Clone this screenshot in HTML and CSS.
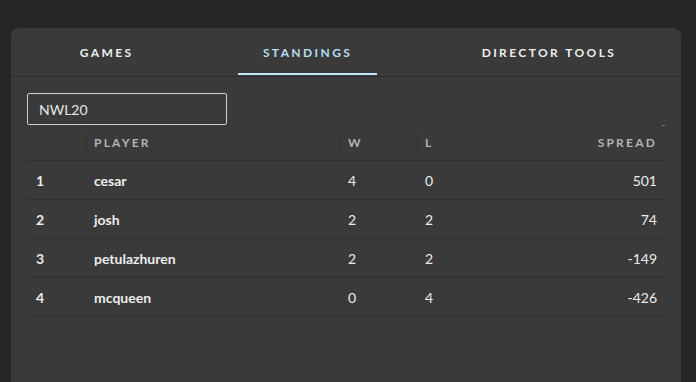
FILE: index.html
```html
<!DOCTYPE html>
<html>
<head>
  <meta charset="UTF-8">
  <title>Standings</title>
  <link rel="stylesheet" href="styles.css">
</head>
<body>
  <div class="card">
    <div class="tabs">
      <div class="tab">GAMES</div>
      <div class="tab active">STANDINGS</div>
      <div class="tab">DIRECTOR TOOLS</div>
    </div>

    <div class="content">
      <div class="division">
        <input class="division-input" type="text" value="NWL20">
        <span class="tick"></span>
      </div>

      <table class="standings">
        <thead>
          <tr>
            <th class="rank"></th>
            <th class="player">PLAYER</th>
            <th class="wins">W</th>
            <th class="losses">L</th>
            <th class="spread">SPREAD</th>
          </tr>
        </thead>
        <tbody>
          <tr>
            <td class="rank">1</td>
            <td class="player">cesar</td>
            <td>4</td>
            <td>0</td>
            <td class="spread">501</td>
          </tr>
          <tr>
            <td class="rank">2</td>
            <td class="player">josh</td>
            <td>2</td>
            <td>2</td>
            <td class="spread">74</td>
          </tr>
          <tr>
            <td class="rank">3</td>
            <td class="player">petulazhuren</td>
            <td>2</td>
            <td>2</td>
            <td class="spread">-149</td>
          </tr>
          <tr>
            <td class="rank">4</td>
            <td class="player">mcqueen</td>
            <td>0</td>
            <td>4</td>
            <td class="spread">-426</td>
          </tr>
        </tbody>
      </table>
    </div>
  </div>
</body>
</html>
```

FILE: styles.css
```css
body {
  margin: 0;
  padding: 28px 0 0 11px;
  background-color: #262626;
  font-family: "Lato", "Noto Sans", sans-serif;
  color: #ececec;
  height: 354px;
  overflow: hidden;
}

.card {
  width: 670px;
  height: 354px;
  background-color: #3a3a3a;
  border-radius: 8px 8px 0 0;
}

.tabs {
  display: flex;
  justify-content: space-around;
  height: 48px;
  border-bottom: 1px solid #2c2c2c;
  padding: 0 0 0 4px;
}
.tab {
  display: flex;
  align-items: center;
  padding: 3px 25px 0 25px;
  font-size: 12px;
  font-weight: bold;
  letter-spacing: 2.4px;
  color: #eeeeee;
  border-bottom: 2px solid transparent;
  box-sizing: border-box;
  height: 47px;
}
.tab.active {
  color: #b6dff2;
  border-bottom-color: #bfe6f8;
}

.content {
  padding: 16px 16px 0 16px;
}

.division {
  position: relative;
  height: 32px;
}
.division-input {
  width: 200px;
  height: 32px;
  box-sizing: border-box;
  background: transparent;
  border: 1px solid #cfcfcf;
  border-radius: 2px;
  padding: 0 11px;
  font-family: inherit;
  font-size: 14px;
  color: #e6e6e6;
  outline: none;
}
.tick {
  position: absolute;
  right: 0;
  bottom: -1px;
  width: 3px;
  height: 1px;
  background: #7a7a7a;
}

.standings {
  width: 638px;
  border-collapse: collapse;
  font-size: 14px;
}
.standings th {
  position: relative;
  height: 35px;
  padding: 0 8px;
  text-align: left;
  font-size: 12px;
  font-weight: bold;
  letter-spacing: 2.2px;
  color: #b4b4b4;
  border-bottom: 1px solid #2e2e2e;
}
.standings th + th::before {
  content: "";
  position: absolute;
  left: 0;
  top: 7px;
  height: 20px;
  width: 1px;
  background: #333333;
}
.standings td {
  height: 38px;
  padding: 0 8px;
  border-bottom: 1px solid #2e2e2e;
  color: #ececec;
}
.standings .rank {
  width: 42px;
  padding-left: 9px;
  font-weight: bold;
}
.standings .player {
  width: 238px;
  font-weight: bold;
}
.standings .wins {
  width: 61px;
}
.standings .losses {
  width: 44px;
}
.standings .spread {
  text-align: right;
}
```
